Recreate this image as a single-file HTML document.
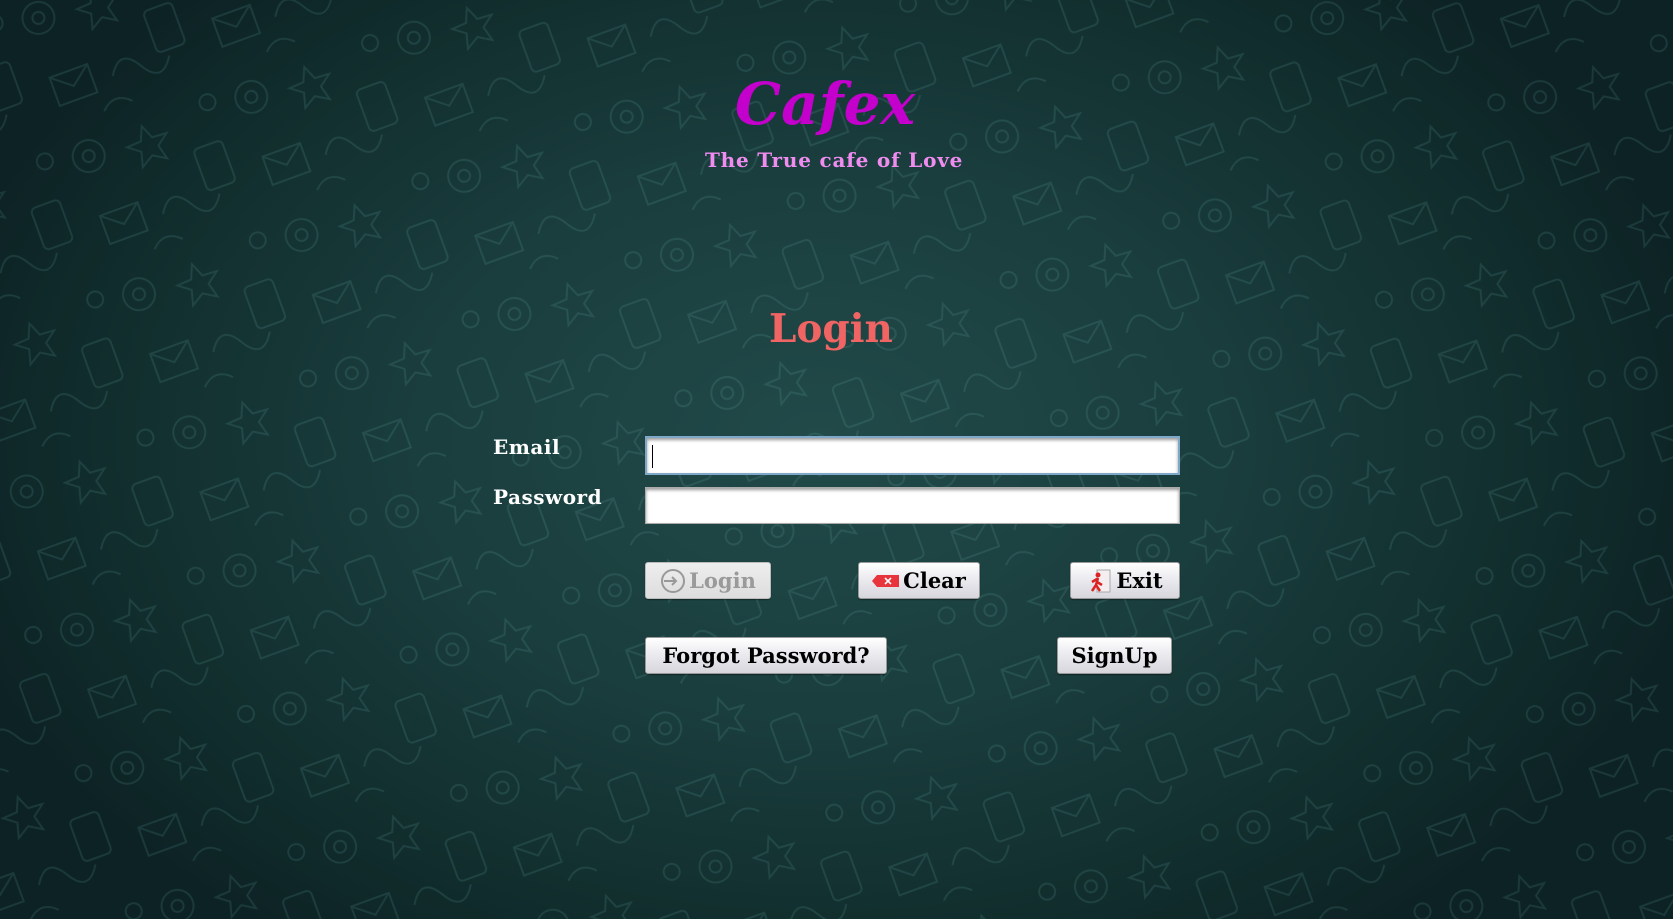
<!DOCTYPE html>
<html><head><meta charset="utf-8"><style>
html,body{margin:0;padding:0}
body{width:1673px;height:919px;overflow:hidden;position:relative;
background:radial-gradient(ellipse 900px 620px at 820px 440px,#214a49 0%,#1a3d3d 45%,#12302f 75%,#0d2224 100%);
font-family:"DejaVu Serif","Liberation Serif",serif;}
#pat{position:absolute;left:0;top:0;opacity:.13}
.abs{position:absolute;white-space:nowrap}
.title{left:0;width:1650px;text-align:center;top:70px;font-size:58px;font-weight:bold;font-style:italic;color:#c400cc}
.tag{left:705px;top:148px;font-size:20px;font-weight:bold;color:#f08cf0;letter-spacing:.8px}
.login{left:769px;top:306px;font-size:39px;font-weight:bold;color:#f06464}
.lbl{font-size:20px;font-weight:bold;color:#fff;letter-spacing:.5px}
.inp{position:absolute;left:645px;width:535px;background:#fff;border:1px solid #aaa;box-shadow:inset 0 2px 3px #999;box-sizing:border-box}
.btn{position:absolute;box-sizing:border-box;border:1px solid #999;border-radius:3px;background:linear-gradient(#fff,#e9e9ee 50%,#d6d6dc);font-weight:bold;font-size:21px;color:#000;display:flex;align-items:center;justify-content:center;gap:3px;box-shadow:0 1px 1px rgba(0,0,0,.4)}
</style></head><body>
<svg id="pat" width="1673" height="919" xmlns="http://www.w3.org/2000/svg">
<defs><pattern id="p" width="173" height="147" patternUnits="userSpaceOnUse" patternTransform="rotate(-20)">
<g fill="none" stroke="#7fd0cc" stroke-width="2">
<circle cx="30" cy="30" r="16"/><circle cx="30" cy="30" r="6"/>
<path d="M90 20 l6 14 15 1 -12 9 4 15 -13 -8 -13 8 4 -15 -12 -9 15 -1z"/>
<rect x="130" y="60" width="30" height="44" rx="5"/>
<path d="M20 90 l40 0 0 30 -40 0z M20 90 l20 16 20 -16"/>
<path d="M80 110 q15 -25 30 0 q15 25 30 0"/>
<circle cx="160" cy="20" r="8"/><path d="M60 140 c10 -10 20 -10 30 0"/>
</g></pattern></defs>
<rect width="1673" height="919" fill="url(#p)"/>
</svg>
<div class="abs title">Cafex</div>
<div class="abs tag">The True cafe of Love</div>
<div class="abs login">Login</div>
<div class="abs lbl" style="left:493px;top:435px">Email</div>
<div class="abs lbl" style="left:493px;top:485px">Password</div>
<div class="inp" style="top:436px;height:39px;border:2px solid #7fa8c8"><div style="position:absolute;left:5px;top:7px;width:1px;height:23px;background:#000"></div></div>
<div class="inp" style="top:487px;height:37px"></div>
<div class="btn" style="left:645px;top:562px;width:126px;height:37px;color:#9a9a9a;border-color:#bbb;background:linear-gradient(#eee,#ddd)">
<svg width="26" height="26" viewBox="0 0 26 26"><circle cx="13" cy="13" r="11" fill="none" stroke="#999" stroke-width="2"/><path d="M4 13h12M12 9l4 4-4 4" stroke="#999" stroke-width="2" fill="none"/></svg>Login</div>
<div class="btn" style="left:858px;top:562px;width:122px;height:37px">
<svg width="28" height="14" viewBox="0 0 28 14"><path d="M5 1h22v12H5L0 7z" fill="#e8343c"/><path d="M13 4l6 6M19 4l-6 6" stroke="#fff" stroke-width="1.6"/></svg>Clear</div>
<div class="btn" style="left:1070px;top:562px;width:110px;height:37px">
<svg width="26" height="26" viewBox="0 0 26 26"><rect x="10" y="2" width="13" height="22" fill="#f4eef0" stroke="#aaa"/><circle cx="11" cy="7" r="2.5" fill="#d22"/><path d="M11 10l-2 7-4 6M10 14l5 3M9 17l4 6M10 11l-5 3" stroke="#d22" stroke-width="2.5" fill="none"/></svg>Exit</div>
<div class="btn" style="left:645px;top:637px;width:242px;height:37px">Forgot Password?</div>
<div class="btn" style="left:1057px;top:637px;width:115px;height:37px">SignUp</div>
</body></html>
